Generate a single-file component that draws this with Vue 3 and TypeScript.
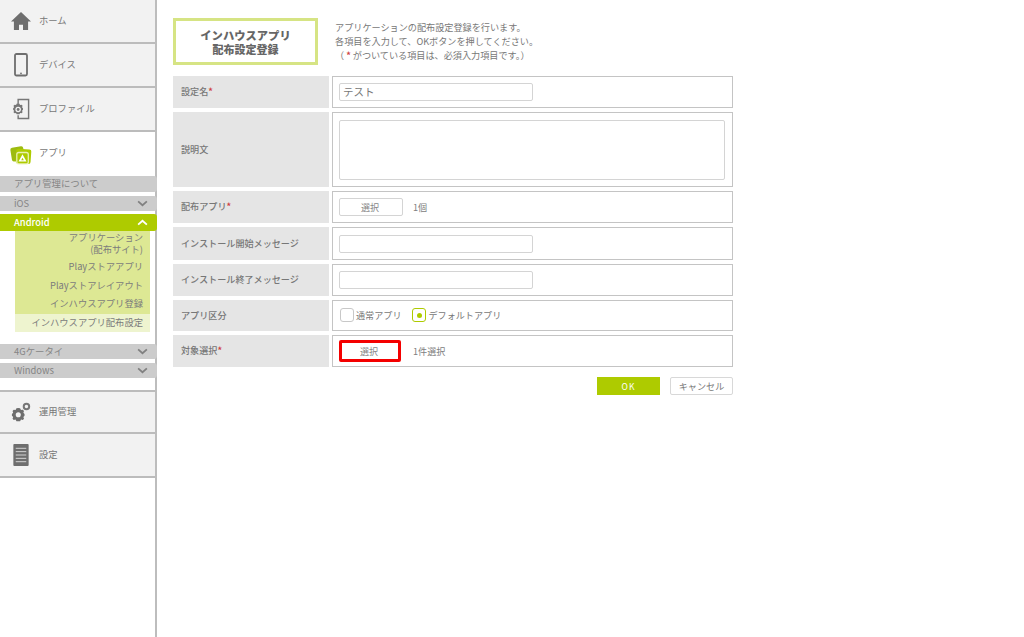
<script setup lang="ts">
interface SubItem { label: string; active?: boolean }
const androidItems: SubItem[] = [
  { label: 'アプリケーション\n(配布サイト)' },
  { label: 'Playストアアプリ' },
  { label: 'Playストアレイアウト' },
  { label: 'インハウスアプリ登録' },
  { label: 'インハウスアプリ配布設定', active: true },
]
</script>

<template>
  <div class="page">
    <aside class="side">
      <a class="nav">
        <svg class="ico" viewBox="0 0 24 22" width="22" height="20"><path fill="#6e6e6e" d="M12 1 1 11.500h3.200V21h5.600v-6h4.400v6h5.600v-9.500H23z"/></svg>
        <span>ホーム</span>
      </a>
      <a class="nav">
        <svg class="ico" viewBox="0 0 14 24" width="14" height="24"><rect x="1" y="1" width="12" height="21.500" rx="1.500" fill="none" stroke="#6e6e6e" stroke-width="1.800"/><circle cx="7" cy="20.300" r=".9" fill="#6e6e6e"/></svg>
        <span>デバイス</span>
      </a>
      <a class="nav">
        <svg class="ico" viewBox="0 0 20 23" width="19" height="23"><path fill="none" stroke="#777" stroke-width="1.500" d="M7 6V1.500h11V21.500H7V18"/><path fill="#777" d="M7 5.500l1.400.4.6 1.500 1.500-.4 1.200 1.200-.6 1.400 1 1v1.800l-1 1 .6 1.400-1.200 1.200-1.500-.4-.6 1.500H5.400l-.6-1.500-1.500.4-1.200-1.200.6-1.400-1-1v-1.800l1-1-.6-1.400 1.200-1.200 1.500.4.6-1.500z"/><circle cx="7" cy="12" r="2.900" fill="#f2f2f2"/><circle cx="7" cy="12" r="1.500" fill="#777"/></svg>
        <span>プロファイル</span>
      </a>
      <a class="nav open">
        <svg class="ico" viewBox="0 0 22 19" width="22" height="19"><rect x="1" y="1.500" width="13" height="14" rx="2" fill="#9dbb10" transform="rotate(-9 7 8)"/><rect x="6" y="3.500" width="15" height="14.500" rx="2" fill="#aecb00" transform="rotate(4 13 10)"/><rect x="6.800" y="7" width="11.500" height="11.500" rx="2" fill="#aecb00" stroke="#e9f0b4" stroke-width="1.300"/><path fill="#fff" d="M12.500 8.800l4 7.200h-8z"/><path fill="#aecb00" d="M12.500 12.300l1.300 2.500h-2.600z"/></svg>
        <span>アプリ</span>
      </a>

      <div class="subs">
        <div class="sub">アプリ管理について</div>
        <div class="sub chev ios">iOS
          <svg viewBox="0 0 12 8" width="11" height="7"><path d="M1 1.500 6 6l5-4.500" fill="none" stroke="#808080" stroke-width="2"/></svg>
        </div>
        <div class="sub chev on">Android
          <svg viewBox="0 0 12 8" width="11" height="7"><path d="M1 6.500 6 2l5 4.500" fill="none" stroke="#fff" stroke-width="2"/></svg>
        </div>
        <ul class="tree">
          <li v-for="item in androidItems" :key="item.label" :class="{ current: item.active }">{{ item.label }}</li>
        </ul>
        <div class="sub chev">4Gケータイ
          <svg viewBox="0 0 12 8" width="11" height="7"><path d="M1 1.500 6 6l5-4.500" fill="none" stroke="#808080" stroke-width="2"/></svg>
        </div>
        <div class="sub chev">Windows
          <svg viewBox="0 0 12 8" width="11" height="7"><path d="M1 1.500 6 6l5-4.500" fill="none" stroke="#808080" stroke-width="2"/></svg>
        </div>
      </div>

      <a class="nav ops">
        <svg class="ico" viewBox="0 0 22 22" width="20" height="21"><path fill="#6e6e6e" d="M8 6.500l2 .3 1 2 2-.4 1.300 1.400-.7 1.900 1.300 1.400v2l-1.300 1.300.7 1.900-1.300 1.400-2-.4-1 1.900H6l-1-1.900-2 .4-1.300-1.400.7-1.900L1 15.100v-2l1.400-1.400-.7-1.900L3 8.400l2 .4 1-2z"/><circle cx="8" cy="14" r="2.800" fill="#f2f2f2"/><circle cx="17" cy="5" r="3" fill="none" stroke="#777" stroke-width="2.200"/></svg>
        <span>運用管理</span>
      </a>
      <a class="nav">
        <svg class="ico" viewBox="0 0 16 23" width="16" height="22"><rect width="16" height="23" rx="1" fill="#6e6e6e"/><path stroke="#d8d8d8" stroke-width="1" d="M2.500 4.500h11M2.500 8h11M2.500 11.500h11M2.500 15h11M2.500 18.500h11"/></svg>
        <span>設定</span>
      </a>
    </aside>

    <main class="main">
      <header class="head">
        <h1 class="title"><b>インハウスアプリ</b><b class="t2">配布設定登録</b></h1>
        <p class="lead">
          アプリケーションの配布設定登録を行います。<br>
          各項目を入力して、OKボタンを押してください。<br>
          （<em class="mark">*</em>がついている項目は、必須入力項目です。）
        </p>
      </header>

      <div class="form">
        <div class="row h32">
          <div class="lab">設定名<em>*</em></div>
          <div class="val"><input class="txt" value="テスト"></div>
        </div>
        <div class="row h75">
          <div class="lab">説明文</div>
          <div class="val"><textarea class="area"></textarea></div>
        </div>
        <div class="row h32">
          <div class="lab">配布アプリ<em>*</em></div>
          <div class="val"><button class="pick">選択</button><span class="count">1個</span></div>
        </div>
        <div class="row h33">
          <div class="lab">インストール開始メッセージ</div>
          <div class="val"><input class="txt"></div>
        </div>
        <div class="row h32">
          <div class="lab">インストール終了メッセージ</div>
          <div class="val"><input class="txt"></div>
        </div>
        <div class="row h31">
          <div class="lab">アプリ区分</div>
          <div class="val radios">
            <span class="box"></span><span class="rlabel">通常アプリ</span>
            <span class="box sel"><i></i></span><span class="rlabel">デフォルトアプリ</span>
          </div>
        </div>
        <div class="row h32">
          <div class="lab">対象選択<em>*</em></div>
          <div class="val"><button class="pick hot">選択</button><span class="count far">1件選択</span></div>
        </div>
      </div>

      <div class="actions">
        <button class="ok">OK</button>
        <button class="cancel">キャンセル</button>
      </div>
    </main>
  </div>
</template>

<style>
html, body { margin: 0; background: #fff; }
</style>

<style scoped>
.page {
  display: flex;
  width: 1024px;
  height: 637px;
  overflow: hidden;
  font-family: "Noto Sans CJK JP", "Noto Sans", sans-serif;
  font-size: 9.300px;
  color: #777;
}
.side {
  width: 155px;
  flex: none;
  border-right: 2px solid #bdbdbd;
  display: flex;
  flex-direction: column;
}
.nav {
  box-sizing: border-box;
  height: 44px;
  border-bottom: 2px solid #bcbcbc;
  background: #f2f2f2;
  display: flex;
  align-items: center;
  position: relative;
  padding: 0 0 2px 39px;
  color: #777;
  font-size: 9.300px;
}
.ico { position: absolute; left: 21px; top: 50%; transform: translate(-50%, -50%); }
.nav.open { background: #fff; border-bottom: 0; padding-bottom: 4px; }
.nav.open .ico { top: 23px; }
.nav.ops { margin-top: 8px; border-top: 2px solid #bcbcbc; }
.subs { display: flex; flex-direction: column; }
.sub {
  box-sizing: border-box;
  height: 16px;
  background: #cccccc;
  border-radius: 0 3px 3px 0;
  padding: 0 9px 2px 14px;
  margin-right: -2px;
  color: #858585;
  font-size: 9.400px;
  display: flex;
  align-items: center;
  justify-content: space-between;
  margin-bottom: 4px;
  position: relative;
}
.sub svg { margin-top: 2px; }
.sub.ios { height: 15px; margin-bottom: 3px; }
.sub.chev:not(.on) { height: 15px; }
.sub.on { background: #aecb00; color: #fff; height: 17px; margin-bottom: 0; font-weight: 500; }
.tree {
  list-style: none;
  margin: 0 5px 12px 15px;
  padding: 0;
  background: #dde894;
}
.tree li {
  box-sizing: border-box;
  text-align: right;
  padding-right: 7px;
  line-height: 17.500px;
  height: 18.500px;
  color: #7c7c7c;
  font-size: 9.300px;
  white-space: pre-line;
}
.tree li:first-child { height: 27px; padding-top: 1px; line-height: 11.500px; }
.tree li.current { background: #eef4cf; }
.main { flex: 1; padding: 18px 0 0 16px; }
.head { display: flex; height: 58px; }
.title {
  box-sizing: border-box;
  width: 145px;
  height: 47px;
  border: 3px solid #d6e484;
  margin: 0;
  display: flex;
  flex-direction: column;
  align-items: center;
  justify-content: center;
  font-size: 11.300px;
  line-height: 14px;
  color: #666;
}
.title .t2 { font-size: 11px; }
.lead {
  margin: 2px 0 0 17px;
  font-size: 9.150px;
  line-height: 14px;
  color: #777;
}
em { color: #d0423f; font-style: normal; font-weight: 700; }
.mark { margin: 0 2px; }
.form { display: flex; flex-direction: column; gap: 4px; width: 560px; }
.row { display: flex; gap: 3px; }
.h31 { height: 31px; }
.h32 { height: 32px; }
.h33 { height: 33px; }
.h75 { height: 75px; }
.lab {
  width: 156px;
  flex: none;
  background: #e5e5e5;
  display: flex;
  align-items: center;
  padding: 0 0 2px 8px;
  box-sizing: border-box;
  font-size: 9.100px;
  font-weight: 500;
  color: #777;
}
.val {
  flex: 1;
  box-sizing: border-box;
  border: 1px solid #c4c4c4;
  display: flex;
  align-items: center;
  padding-left: 6px;
}
.txt {
  box-sizing: border-box;
  width: 194px;
  height: 18px;
  border: 1px solid #d4d4d4;
  border-radius: 2px;
  padding: 0 3px 2px;
  font: inherit;
  font-size: 10.500px;
  color: #777;
  outline: none;
}
.area {
  box-sizing: border-box;
  width: 386px;
  height: 60px;
  border: 1px solid #d4d4d4;
  border-radius: 2px;
  resize: none;
  outline: none;
  margin: 0;
  display: block;
}
.pick {
  box-sizing: border-box;
  width: 64px;
  height: 18px;
  background: #fff;
  border: 1px solid #d4d4d4;
  border-radius: 2px;
  font: inherit;
  font-size: 9.100px;
  color: #888;
  padding: 0 2px 1px 0;
}
.pick.hot { border: 3px solid #f40000; width: 62px; height: 22px; }
.count { margin: 0 0 1px 10px; font-size: 9.100px; color: #808080; }
.count.far { margin-left: 12px; }
.radios { padding: 0 0 1px 7px; }
.box {
  box-sizing: border-box;
  width: 14px;
  height: 14px;
  border: 1px solid #c8c8c8;
  border-radius: 3px;
  display: flex;
  align-items: center;
  justify-content: center;
  margin-right: 2px;
}
.box.sel { border: 1.500px solid #aecb00; margin-left: 11px; }
.box i { width: 5px; height: 5px; border-radius: 50%; background: #aecb00; }
.rlabel { font-size: 9.100px; color: #777; }
.actions {
  width: 560px;
  display: flex;
  justify-content: flex-end;
  gap: 10px;
  margin-top: 10px;
}
.ok {
  width: 63px;
  height: 18px;
  background: #aecb00;
  border: 0;
  color: #fff;
  font: inherit;
  font-size: 8.500px;
  letter-spacing: 1px;
  padding: 0;
}
.cancel {
  width: 63px;
  height: 18px;
  background: #fff;
  border: 1px solid #d8d8d8;
  border-radius: 2px;
  color: #777;
  font: inherit;
  font-size: 9.100px;
  padding: 0;
}
</style>
